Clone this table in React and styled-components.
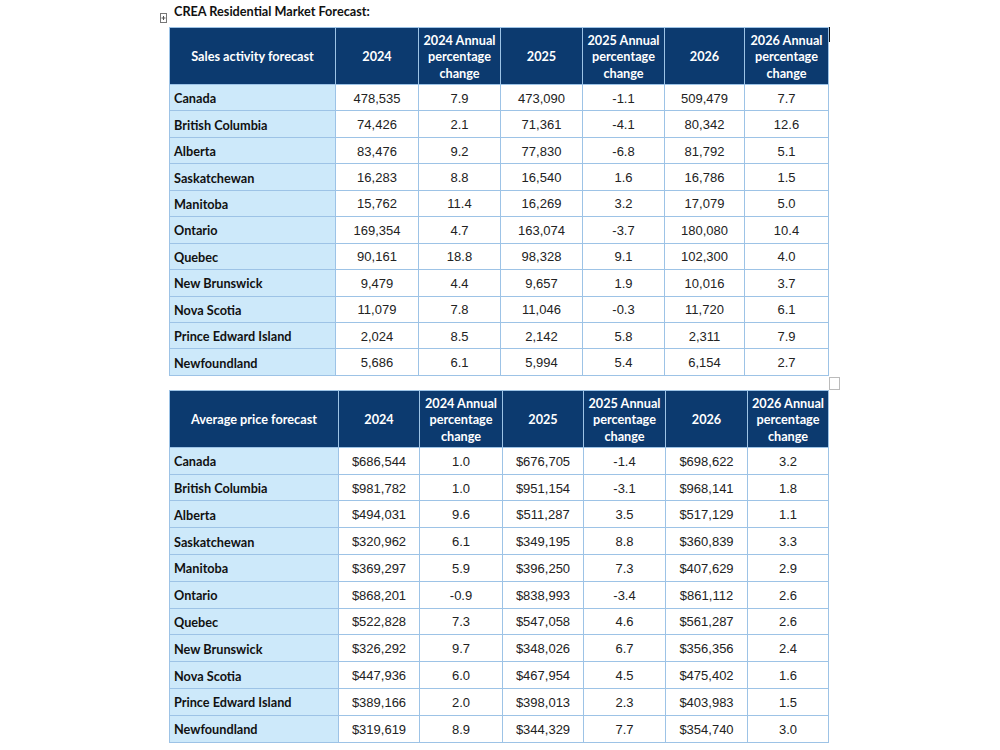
import React from "react";
import styled, { createGlobalStyle } from "styled-components";

const Global = createGlobalStyle`
  html, body { margin: 0; padding: 0; background: #fff; }
  body { width: 1000px; height: 750px; overflow: hidden; }
`;

const Page = styled.div`
  display: flex;
  flex-direction: column;
  padding: 4px 0 0 169px;
`;

const TitleRow = styled.div`
  position: relative;
  height: 23px;
`;

const Title = styled.div`
  font-family: Lato, "Liberation Sans", sans-serif;
  font-weight: 700;
  font-size: 12.7px;
  color: #111;
  padding-left: 5px;
  line-height: 14px;
`;

const MoveHandle = styled.svg`
  position: absolute;
  left: -9px;
  top: 9px;
`;

const TableWrap = styled.div`
  position: relative;
  width: 659px;
  margin-bottom: ${(p) => p.$mb || 0}px;
`;

const Cursor = styled.div`
  position: absolute;
  right: -2px;
  top: 0;
  width: 1px;
  height: 15px;
  background: #111;
`;

const ResizeBox = styled.div`
  position: absolute;
  right: -12px;
  bottom: -14px;
  width: 9px;
  height: 11px;
  border: 1px solid #bbb;
  background: #fff;
`;

const Table = styled.table`
  border-collapse: collapse;
  table-layout: fixed;
  width: 659px;
`;

const HeadCell = styled.th`
  background: #0c3a6f;
  color: #fff;
  font-family: Lato, "Liberation Sans", sans-serif;
  font-weight: 700;
  font-size: 12.7px;
  line-height: 16.5px;
  text-align: center;
  border: 1px solid #9dc3e6;
  padding: 1px 3px 0;
  vertical-align: middle;
`;

const Row = styled.tr`
  height: ${(p) => p.$h}px;
`;

const HeadRow = styled.tr`
  height: ${(p) => p.$h}px;
`;

const LabelCell = styled.td`
  background: #cde9fa;
  color: #111;
  font-family: Lato, "Liberation Sans", sans-serif;
  font-weight: 700;
  font-size: 12.7px;
  text-align: left;
  padding: 1px 0 0 4px;
  border: 1px solid #9dc3e6;
  white-space: nowrap;
`;

const NumCell = styled.td`
  background: #fff;
  color: #222;
  font-family: "Liberation Sans", Arial, sans-serif;
  font-size: 13px;
  text-align: center;
  padding: 1px 0 0;
  border: 1px solid #9dc3e6;
`;

const salesRows = [
  ["Canada", "478,535", "7.9", "473,090", "-1.1", "509,479", "7.7"],
  ["British Columbia", "74,426", "2.1", "71,361", "-4.1", "80,342", "12.6"],
  ["Alberta", "83,476", "9.2", "77,830", "-6.8", "81,792", "5.1"],
  ["Saskatchewan", "16,283", "8.8", "16,540", "1.6", "16,786", "1.5"],
  ["Manitoba", "15,762", "11.4", "16,269", "3.2", "17,079", "5.0"],
  ["Ontario", "169,354", "4.7", "163,074", "-3.7", "180,080", "10.4"],
  ["Quebec", "90,161", "18.8", "98,328", "9.1", "102,300", "4.0"],
  ["New Brunswick", "9,479", "4.4", "9,657", "1.9", "10,016", "3.7"],
  ["Nova Scotia", "11,079", "7.8", "11,046", "-0.3", "11,720", "6.1"],
  ["Prince Edward Island", "2,024", "8.5", "2,142", "5.8", "2,311", "7.9"],
  ["Newfoundland", "5,686", "6.1", "5,994", "5.4", "6,154", "2.7"],
];

const priceRows = [
  ["Canada", "$686,544", "1.0", "$676,705", "-1.4", "$698,622", "3.2"],
  ["British Columbia", "$981,782", "1.0", "$951,154", "-3.1", "$968,141", "1.8"],
  ["Alberta", "$494,031", "9.6", "$511,287", "3.5", "$517,129", "1.1"],
  ["Saskatchewan", "$320,962", "6.1", "$349,195", "8.8", "$360,839", "3.3"],
  ["Manitoba", "$369,297", "5.9", "$396,250", "7.3", "$407,629", "2.9"],
  ["Ontario", "$868,201", "-0.9", "$838,993", "-3.4", "$861,112", "2.6"],
  ["Quebec", "$522,828", "7.3", "$547,058", "4.6", "$561,287", "2.6"],
  ["New Brunswick", "$326,292", "9.7", "$348,026", "6.7", "$356,356", "2.4"],
  ["Nova Scotia", "$447,936", "6.0", "$467,954", "4.5", "$475,402", "1.6"],
  ["Prince Edward Island", "$389,166", "2.0", "$398,013", "2.3", "$403,983", "1.5"],
  ["Newfoundland", "$319,619", "8.9", "$344,329", "7.7", "$354,740", "3.0"],
];

function ForecastTable({ label, rows, widths, headH, rowH }) {
  const heads = [
    label,
    "2024",
    "2024 Annual percentage change",
    "2025",
    "2025 Annual percentage change",
    "2026",
    "2026 Annual percentage change",
  ];
  return (
    <Table>
      <colgroup>
        {widths.map((w, i) => (
          <col key={i} style={{ width: w }} />
        ))}
      </colgroup>
      <thead>
        <HeadRow $h={headH}>
          {heads.map((h, i) => (
            <HeadCell key={i}>{h}</HeadCell>
          ))}
        </HeadRow>
      </thead>
      <tbody>
        {rows.map((r) => (
          <Row key={r[0]} $h={rowH}>
            <LabelCell>{r[0]}</LabelCell>
            {r.slice(1).map((v, i) => (
              <NumCell key={i}>{v}</NumCell>
            ))}
          </Row>
        ))}
      </tbody>
    </Table>
  );
}

export default function App() {
  return (
    <>
      <Global />
      <Page>
        <TitleRow>
          <MoveHandle width="7" height="10" viewBox="0 0 7 10">
            <rect x="0.5" y="0.5" width="6" height="9" fill="#fff" stroke="#777" />
            <path d="M1.5 5H5.5M3.5 3V7" stroke="#555" strokeWidth="1" />
          </MoveHandle>
          <Title>CREA Residential Market Forecast:</Title>
        </TitleRow>
        <TableWrap $mb={14}>
          <Cursor />
          <ResizeBox />
          <ForecastTable
            label="Sales activity forecast"
            rows={salesRows}
            widths={[166, 83, 82, 82, 82, 80, 84]}
            headH={57}
            rowH={26.45}
          />
        </TableWrap>
        <TableWrap>
          <ForecastTable
            label="Average price forecast"
            rows={priceRows}
            widths={[169, 81, 83, 81, 82, 82, 81]}
            headH={57}
            rowH={26.8}
          />
        </TableWrap>
      </Page>
    </>
  );
}
